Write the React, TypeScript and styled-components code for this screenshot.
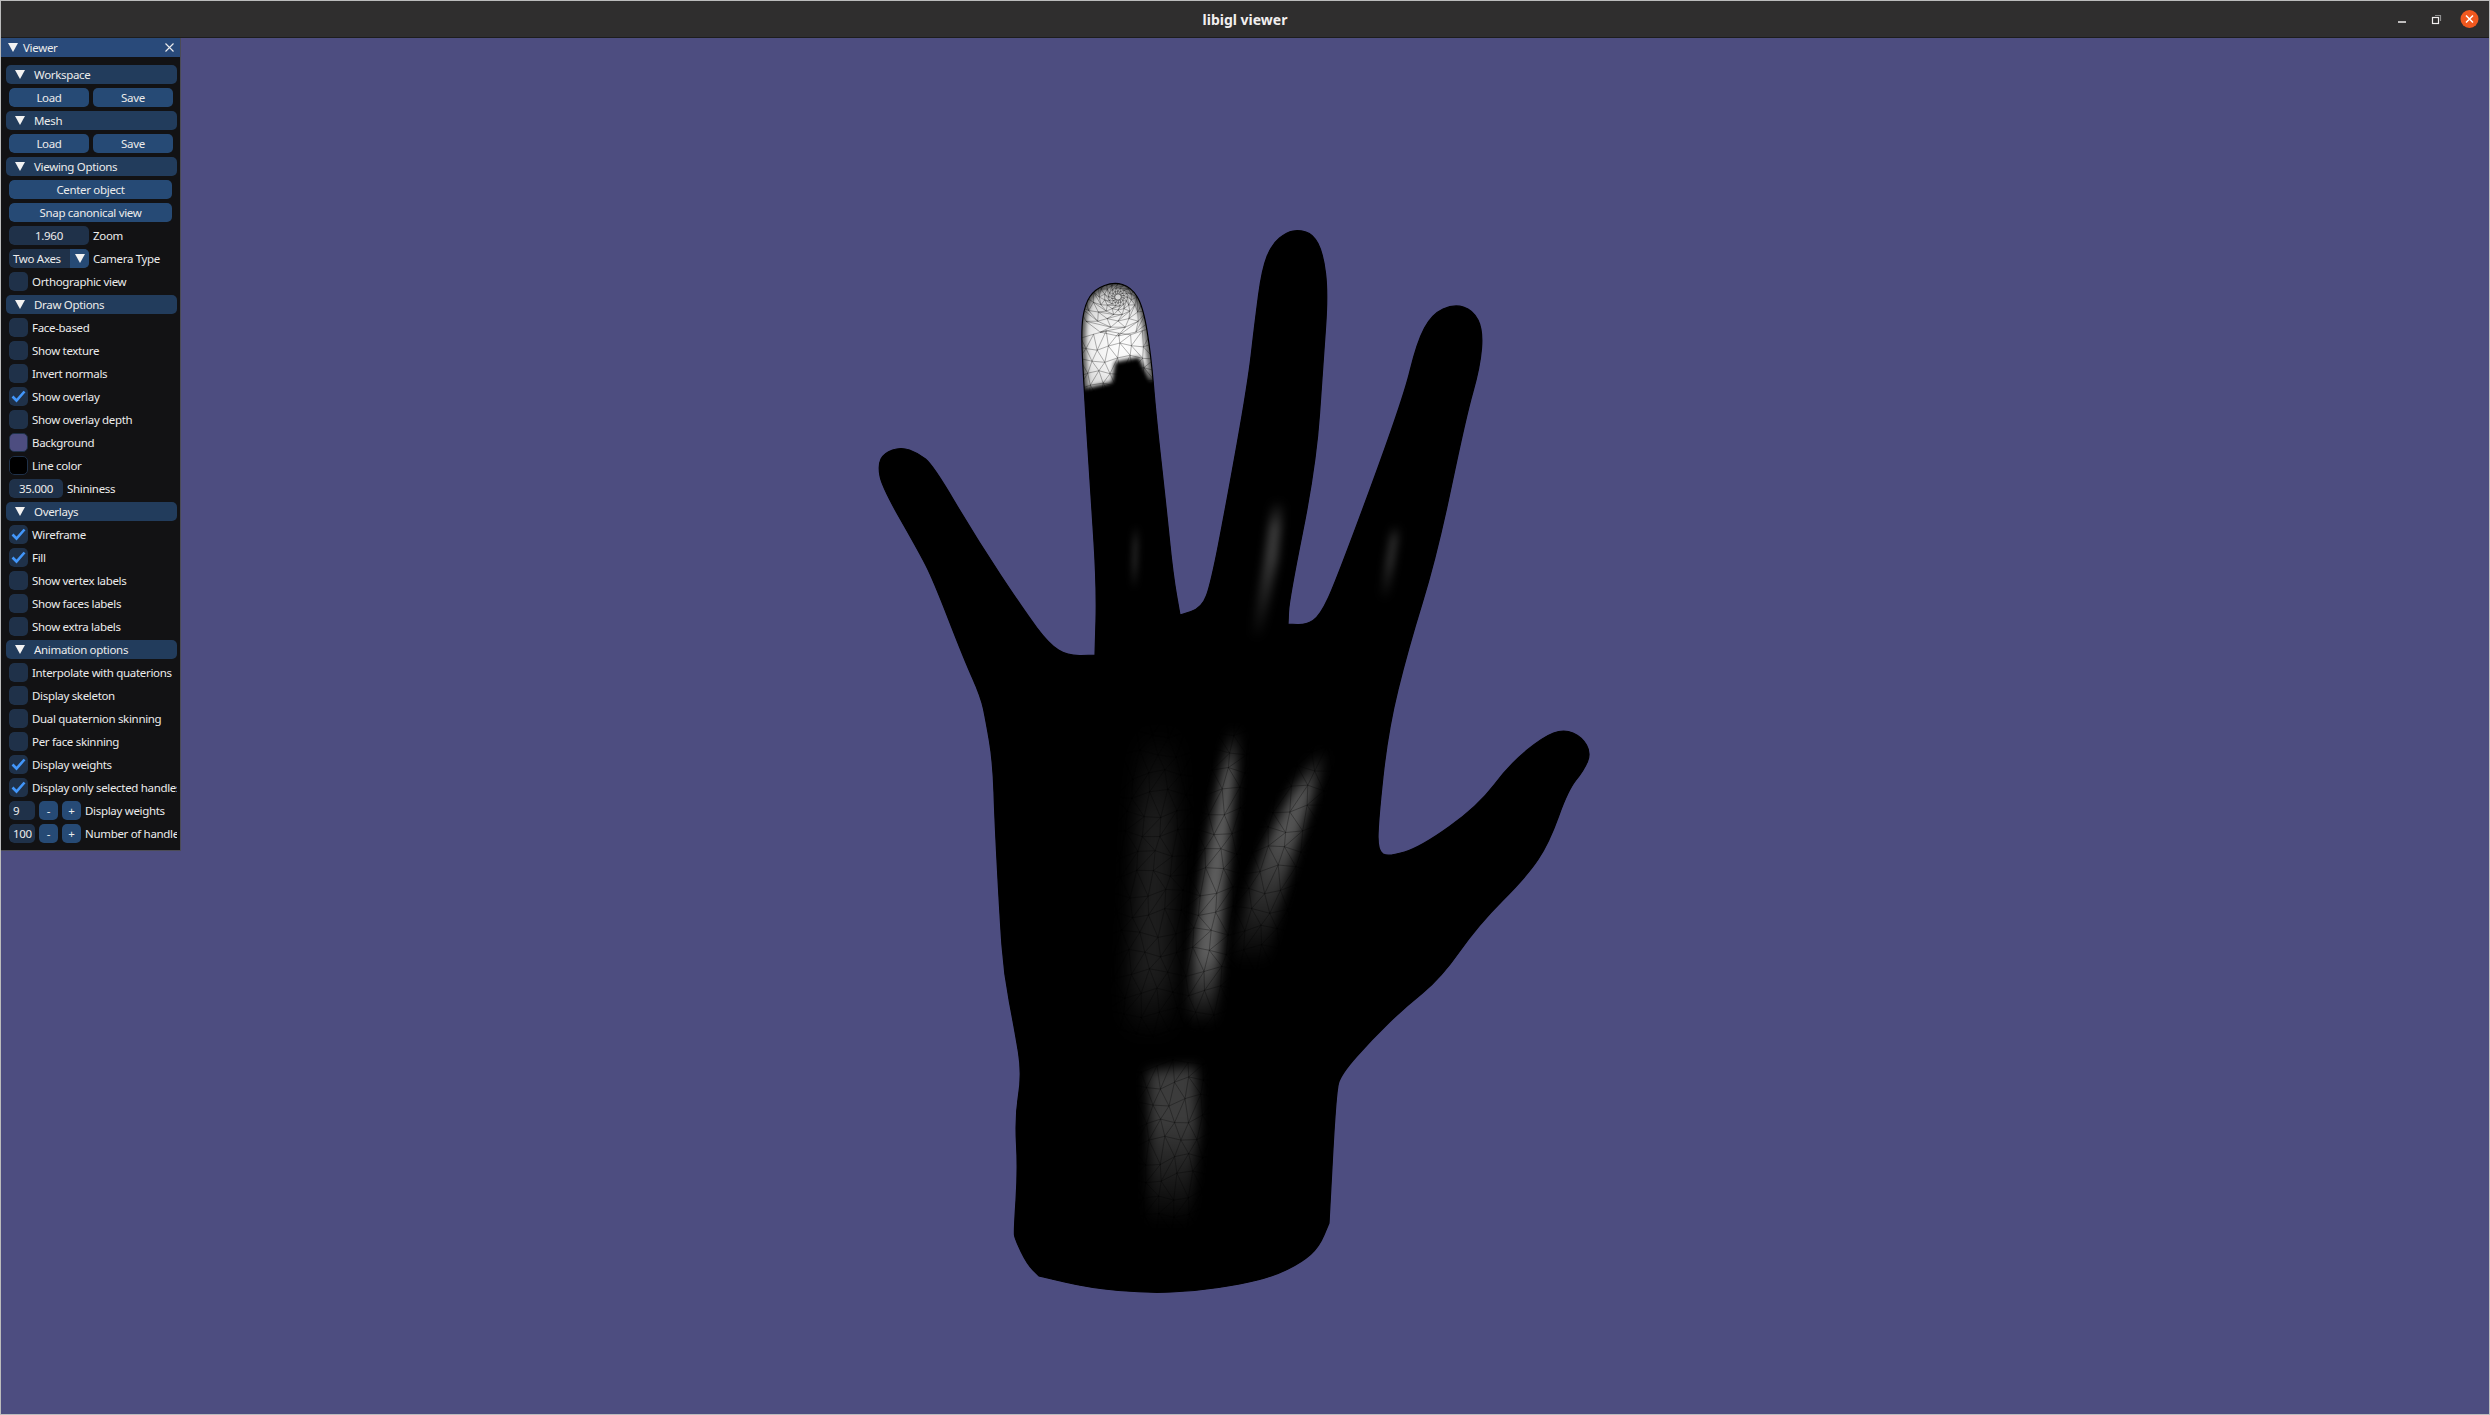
import React from 'react';
import styled, { createGlobalStyle } from 'styled-components';

const GlobalStyle = createGlobalStyle`
  html, body, #root { margin: 0; padding: 0; width: 100%; height: 100%; overflow: hidden; }
  body { background: #4d4d80; font-family: "Noto Sans", "Open Sans", sans-serif; }
`;

const Win = styled.div`
  width: 2490px;
  height: 1415px;
  display: flex;
  flex-direction: column;
  background: #4d4d80;
  border: 1px solid #bcbcbc;
  box-sizing: border-box;
`;

const TitleBar = styled.header`
  height: 37px;
  flex: none;
  position: relative;
  display: flex;
  align-items: center;
  justify-content: center;
  background: #2f2e2e;
  border-bottom: 1px solid #1d1d1d;
  box-sizing: border-box;
  color: #f2efef;
  font: 700 14px "Noto Sans", sans-serif;
`;

const WinControls = styled.div`
  position: absolute;
  right: 0;
  top: 0;
  bottom: 0;
  display: flex;
  align-items: center;
`;

const Viewport = styled.main`
  flex: 1;
  position: relative;
  min-height: 0;
`;

const Canvas = styled.svg`
  display: block;
  width: 100%;
  height: 100%;
`;

const Panel = styled.aside`
  position: absolute;
  left: 0;
  top: 0;
  width: 179px;
  background: #121214;
  border: 1px solid #4b4b55;
  border-top: 0;
  border-left: 0;
  box-sizing: content-box;
  color: #ececec;
  font: 400 11.5px/19px "Noto Sans", sans-serif;
  letter-spacing: -0.32px;
`;

const PanelTitle = styled.div`
  height: 19px;
  display: flex;
  align-items: center;
  gap: 5px;
  padding: 0 6px 0 7px;
  background: #294a7a;
  span { flex: 1; }
`;

const PanelBody = styled.div`
  padding: 8px 3px 7px 5px;
  display: flex;
  flex-direction: column;
  gap: 4px;
`;

const Header = styled.div`
  height: 19px;
  display: flex;
  align-items: center;
  gap: 9px;
  padding-left: 9px;
  border-radius: 5px;
  background: #223c5c;
`;

const Row = styled.div`
  height: 19px;
  display: flex;
  gap: 4px;
  margin-left: 3px;
  white-space: nowrap;
  overflow: hidden;
  border-radius: 5px 0 0 5px;
`;

const Button = styled.div<{ $w?: number }>`
  flex: ${p => (p.$w ? 'none' : '1')};
  width: ${p => (p.$w ? `${p.$w}px` : 'auto')};
  height: 19px;
  text-align: center;
  border-radius: 5px;
  background: #264a75;
`;

const Input = styled.div<{ $w: number; $left?: boolean }>`
  flex: none;
  width: ${p => p.$w}px;
  height: 19px;
  box-sizing: border-box;
  padding: 0 ${p => (p.$left ? '4px' : '0')};
  text-align: ${p => (p.$left ? 'left' : 'center')};
  border-radius: 5px;
  background: #1f3149;
`;

const Combo = styled(Input)`
  display: flex;
  justify-content: space-between;
  overflow: hidden;
  padding: 0 0 0 4px;
`;

const ComboArrow = styled.div`
  width: 19px;
  display: flex;
  align-items: center;
  justify-content: center;
  background: #264a75;
`;

const Box = styled.div<{ $color?: string }>`
  flex: none;
  width: 19px;
  height: 19px;
  display: flex;
  align-items: center;
  justify-content: center;
  border-radius: 5px;
  background: ${p => p.$color ?? '#1f3149'};
  box-sizing: border-box;
  border: ${p => (p.$color ? '1px solid #1f3149' : '0')};
`;

const Triangle = () => (
  <svg width="10" height="9" viewBox="0 0 10 9" style={{ flex: 'none' }}>
    <path d="M0 0H10L5 9Z" fill="#f2f2f2" />
  </svg>
);

const Check = () => (
  <svg width="15" height="13" viewBox="0 0 15 13">
    <path d="M1.5 6.5L5.5 10.5L13.5 1.5" fill="none" stroke="#4296fa" strokeWidth="2.6" />
  </svg>
);

type Item =
  | { kind: 'header'; label: string }
  | { kind: 'pair'; a: string; b: string }
  | { kind: 'button'; label: string }
  | { kind: 'input'; value: string; w: number; label: string }
  | { kind: 'combo'; value: string; label: string }
  | { kind: 'check'; label: string; on?: boolean }
  | { kind: 'color'; label: string; color: string }
  | { kind: 'stepper'; value: string; label: string };

const items: Item[] = [
  { kind: 'header', label: 'Workspace' },
  { kind: 'pair', a: 'Load', b: 'Save' },
  { kind: 'header', label: 'Mesh' },
  { kind: 'pair', a: 'Load', b: 'Save' },
  { kind: 'header', label: 'Viewing Options' },
  { kind: 'button', label: 'Center object' },
  { kind: 'button', label: 'Snap canonical view' },
  { kind: 'input', value: '1.960', w: 80, label: 'Zoom' },
  { kind: 'combo', value: 'Two Axes', label: 'Camera Type' },
  { kind: 'check', label: 'Orthographic view' },
  { kind: 'header', label: 'Draw Options' },
  { kind: 'check', label: 'Face-based' },
  { kind: 'check', label: 'Show texture' },
  { kind: 'check', label: 'Invert normals' },
  { kind: 'check', label: 'Show overlay', on: true },
  { kind: 'check', label: 'Show overlay depth' },
  { kind: 'color', label: 'Background', color: '#4d4d80' },
  { kind: 'color', label: 'Line color', color: '#000000' },
  { kind: 'input', value: '35.000', w: 54, label: 'Shininess' },
  { kind: 'header', label: 'Overlays' },
  { kind: 'check', label: 'Wireframe', on: true },
  { kind: 'check', label: 'Fill', on: true },
  { kind: 'check', label: 'Show vertex labels' },
  { kind: 'check', label: 'Show faces labels' },
  { kind: 'check', label: 'Show extra labels' },
  { kind: 'header', label: 'Animation options' },
  { kind: 'check', label: 'Interpolate with quaterions' },
  { kind: 'check', label: 'Display skeleton' },
  { kind: 'check', label: 'Dual quaternion skinning' },
  { kind: 'check', label: 'Per face skinning' },
  { kind: 'check', label: 'Display weights', on: true },
  { kind: 'check', label: 'Display only selected handles', on: true },
  { kind: 'stepper', value: '9', label: 'Display weights' },
  { kind: 'stepper', value: '100', label: 'Number of handles' },
];

const renderItem = (it: Item, i: number) => {
  switch (it.kind) {
    case 'header':
      return <Header key={i}><Triangle /><span>{it.label}</span></Header>;
    case 'pair':
      return (
        <Row key={i}>
          <Button $w={80}>{it.a}</Button>
          <Button $w={80}>{it.b}</Button>
        </Row>
      );
    case 'button':
      return <Row key={i}><Button $w={163}>{it.label}</Button></Row>;
    case 'input':
      return <Row key={i}><Input $w={it.w}>{it.value}</Input><span>{it.label}</span></Row>;
    case 'combo':
      return (
        <Row key={i}>
          <Combo $w={80}>
            {it.value}
            <ComboArrow><Triangle /></ComboArrow>
          </Combo>
          <span>{it.label}</span>
        </Row>
      );
    case 'check':
      return <Row key={i}><Box>{it.on && <Check />}</Box><span>{it.label}</span></Row>;
    case 'color':
      return <Row key={i}><Box $color={it.color} /><span>{it.label}</span></Row>;
    case 'stepper':
      return (
        <Row key={i}>
          <Input $w={26} $left>{it.value}</Input>
          <Button $w={19}>-</Button>
          <Button $w={19}>+</Button>
          <span>{it.label}</span>
        </Row>
      );
  }
};

// outline of the hand, in window pixels. a point written twice stays a sharp corner
const outline: [number, number][] = [
  [1147, 1293], [1090, 1288], [1039, 1276], [1039, 1276], [1027, 1264], [1015, 1239], [1014, 1231], [1018, 1170],
  [1015, 1117], [1022, 1074], [1015, 1031], [1004, 974], [1000, 917], [995, 823], [993, 762],
  [986, 721], [981, 697], [964, 659], [933, 579], [918, 550], [882, 487], [878, 465], [884, 453],
  [901, 447], [918, 453], [933, 465], [976, 538], [1025, 612], [1049, 644], [1068, 656], [1095, 655], [1095, 655],
  [1097, 587], [1090, 481], [1084, 387], [1081, 330], [1085, 304], [1095, 289], [1114, 282],
  [1131, 287], [1143, 306], [1151, 355], [1156, 416], [1166, 506], [1173, 575], [1180, 615], [1180, 615],
  [1202, 608], [1211, 583], [1226, 506], [1248, 383], [1255, 322], [1262, 269], [1272, 244],
  [1287, 232], [1299, 230], [1313, 234], [1323, 253], [1328, 293], [1323, 363], [1316, 465],
  [1289, 600], [1288, 624], [1288, 624], [1306, 625], [1320, 616], [1337, 579], [1403, 400], [1417, 342],
  [1432, 314], [1454, 304], [1473, 310], [1483, 330], [1480, 367], [1466, 416], [1437, 555],
  [1408, 649], [1388, 730], [1378, 823], [1378, 851], [1388, 857], [1421, 847], [1478, 806],
  [1510, 764], [1543, 737], [1564, 729], [1582, 737], [1591, 753], [1584, 770], [1568, 790],
  [1549, 843], [1527, 876], [1478, 925], [1441, 978], [1404, 1008], [1372, 1039], [1341, 1074],
  [1336, 1092], [1329, 1223], [1329, 1223], [1319, 1247], [1302, 1262], [1274, 1276], [1241, 1284], [1196, 1291],
];

const smooth = (pts: [number, number][]) => {
  const mid = (a: [number, number], b: [number, number]) => [(a[0] + b[0]) / 2, (a[1] + b[1]) / 2];
  const start = mid(pts[pts.length - 1], pts[0]);
  let d = `M${start[0]} ${start[1]}`;
  pts.forEach((p, i) => {
    const m = mid(p, pts[(i + 1) % pts.length]);
    d += `Q${p[0]} ${p[1]} ${m[0]} ${m[1]}`;
  });
  return d + 'Z';
};

// triangle lattice with a little wobble so it doesn't read as a ruled grid
const lattice = (x0: number, y0: number, cols: number, rows: number, dx: number, dy: number, slant: number, tilt: number) => {
  const at = (c: number, r: number): [number, number] => {
    const w = Math.sin(c * 12.9 + r * 78.2) * 0.22;
    const v = Math.sin(c * 39.3 + r * 11.1) * 0.22;
    return [
      +(x0 + (c + (r % 2) * 0.5 + w) * dx + r * slant).toFixed(1),
      +(y0 + (r + v) * dy + c * tilt).toFixed(1),
    ];
  };
  const out: string[] = [];
  for (let r = 0; r <= rows; r++) {
    for (let c = 0; c <= cols; c++) {
      const p = at(c, r);
      if (c < cols) out.push(`M${p}L${at(c + 1, r)}`);
      if (r < rows) {
        out.push(`M${p}L${at(c, r + 1)}`);
        const other = r % 2 ? c + 1 : c - 1;
        if (other >= 0 && other <= cols) out.push(`M${p}L${at(other, r + 1)}`);
      }
    }
  }
  return out.join('');
};

// rings close together under the tip of the finger, with zigzag spokes between them
const tipRings = () => {
  const cx = 1118;
  const cy = 297;
  const radii = [3, 6, 9, 13, 18, 24, 31, 39];
  const out: string[] = [];
  const pt = (r: number, t: number) => `${(cx + r * 1.05 * Math.cos(t)).toFixed(1)} ${(cy + r * Math.sin(t)).toFixed(1)}`;
  radii.forEach((r, i) => {
    const n = 14;
    for (let a = 0; a < n; a++) {
      const t = ((a + (i % 2) * 0.5) / n) * Math.PI * 2;
      const t2 = ((a + 1 + (i % 2) * 0.5) / n) * Math.PI * 2;
      out.push(`M${pt(r, t)}L${pt(r, t2)}`);
      const next = radii[i + 1];
      if (next) {
        const s = ((a + ((i + 1) % 2) * 0.5) / n) * Math.PI * 2;
        const s2 = ((a + 1 + ((i + 1) % 2) * 0.5) / n) * Math.PI * 2;
        out.push(`M${pt(r, t)}L${pt(next, s)}M${pt(r, t)}L${pt(next, s2)}`);
      }
    }
  });
  return out.join('');
};

const streaks = [
  { d: 'M1232 722Q1216 800 1206 860T1186 1032L1214 1032Q1224 900 1240 722Z', c: '#5e5e5e', b: 6, fade: [0.02, 0.16, 0.75, 0.98] },
  { d: 'M1320 750Q1292 786 1270 836T1232 965L1266 965Q1286 870 1326 756Z', c: '#545454', b: 6, fade: [0, 0.2, 0.4, 1] },
  { d: 'M1142 730L1128 1036H1170L1176 730Z', c: '#1e1e1e', b: 10, fade: [0, 0.3, 0.8, 1] },
  { d: 'M1148 1072L1196 1064L1198 1130L1190 1225L1148 1225L1150 1130Z', c: '#3c3c3c', b: 6, fade: [0, 0.04, 0.35, 1] },
  { d: 'M1272 500L1264 560L1250 640L1262 640L1278 560L1284 500Z', c: '#383838', b: 4, fade: [0, 0.2, 0.4, 1] },
  { d: 'M1392 525L1380 600L1388 600L1400 525Z', c: '#303030', b: 4, fade: [0, 0.2, 0.5, 1] },
  { d: 'M1133 525L1131 590L1137 590L1139 525Z', c: '#222222', b: 3, fade: [0, 0.3, 0.6, 1] },
];

const Blur = ({ id, sd }: { id: string; sd: number }) => (
  <filter id={id} x="-150%" y="-20%" width="400%" height="140%" colorInterpolationFilters="sRGB">
    <feGaussianBlur stdDeviation={sd} />
  </filter>
);

const Hand = () => (
  <Canvas viewBox="1 38 2488 1376" preserveAspectRatio="none">
    <defs>
      <clipPath id="hand"><path d={smooth(outline)} /></clipPath>
      <Blur id="b2" sd={2} />
      <Blur id="b3" sd={3} />
      <Blur id="b4" sd={4} />
      <Blur id="b6" sd={6} />
      <Blur id="b10" sd={10} />
      {streaks.map((s, i) => (
        <linearGradient key={i} id={`s${i}`} x1="0" y1="0" x2="0" y2="1">
          <stop offset={s.fade[0]} stopColor={s.c} stopOpacity="0" />
          <stop offset={s.fade[1]} stopColor={s.c} />
          <stop offset={s.fade[2]} stopColor={s.c} />
          <stop offset={s.fade[3]} stopColor={s.c} stopOpacity="0" />
        </linearGradient>
      ))}
      <radialGradient id="tip" gradientUnits="userSpaceOnUse" cx="1122" cy="346" r="72">
        <stop offset="0" stopColor="#ffffff" />
        <stop offset="0.4" stopColor="#f0f0f0" />
        <stop offset="0.75" stopColor="#cfcfcf" />
        <stop offset="1" stopColor="#a0a0a0" />
      </radialGradient>
    </defs>
    <path d={smooth(outline)} fill="#000" />
    <g clipPath="url(#hand)">
      {streaks.map((s, i) => (
        <path key={i} d={s.d} fill={`url(#s${i})`} filter={`url(#b${s.b})`} />
      ))}
      <path d={lattice(1130, 715, 14, 16, 17, 20, -3, -0.6)} fill="none" stroke="#000" strokeWidth="0.6" strokeOpacity="0.5" />
      <path d={lattice(1125, 1070, 6, 10, 15, 19, -1, -2)} fill="none" stroke="#000" strokeWidth="0.6" strokeOpacity="0.5" />
      <path d="M1072 276H1165V380L1150 380L1139 357L1115 362L1112 382L1084 389L1072 389Z" fill="url(#tip)" filter="url(#b2)" />
      <path d={smooth(outline)} fill="none" stroke="#000" strokeWidth="8" strokeOpacity="0.6" filter="url(#b2)" />
      <path d={tipRings()} fill="none" stroke="#000" strokeWidth="0.55" strokeOpacity="0.55" />
      <path d={lattice(1068, 336, 9, 5, 12, 13, 0, -0.8)} fill="none" stroke="#000" strokeWidth="0.55" strokeOpacity="0.55" />
    </g>
    <path d={smooth(outline)} fill="none" stroke="#000" strokeWidth="1.2" />
  </Canvas>
);

export default function App() {
  return (
    <Win>
      <GlobalStyle />
      <TitleBar>
        libigl viewer
        <WinControls>
          <svg width="110" height="36" viewBox="0 0 110 36">
            <path d="M19 21H27" stroke="#f2efef" strokeWidth="1.5" />
            <rect x="53.5" y="16.5" width="6" height="6" fill="none" stroke="#f2efef" strokeWidth="1.2" />
            <path d="M56 14.5H61.5V20" fill="none" stroke="#8f8f8f" strokeWidth="1.2" />
            <circle cx="90.5" cy="18" r="9" fill="#f0581f" />
            <path d="M87 14.5L94 21.5M94 14.5L87 21.5" stroke="#fff" strokeWidth="1.5" />
          </svg>
        </WinControls>
      </TitleBar>
      <Viewport>
        <Hand />
        <Panel>
          <PanelTitle>
            <Triangle />
            <span>Viewer</span>
            <svg width="9" height="9" viewBox="0 0 9 9">
              <path d="M0.5 0.5L8.5 8.5M8.5 0.5L0.5 8.5" stroke="#ececec" strokeWidth="1.1" />
            </svg>
          </PanelTitle>
          <PanelBody>{items.map(renderItem)}</PanelBody>
        </Panel>
      </Viewport>
    </Win>
  );
}
